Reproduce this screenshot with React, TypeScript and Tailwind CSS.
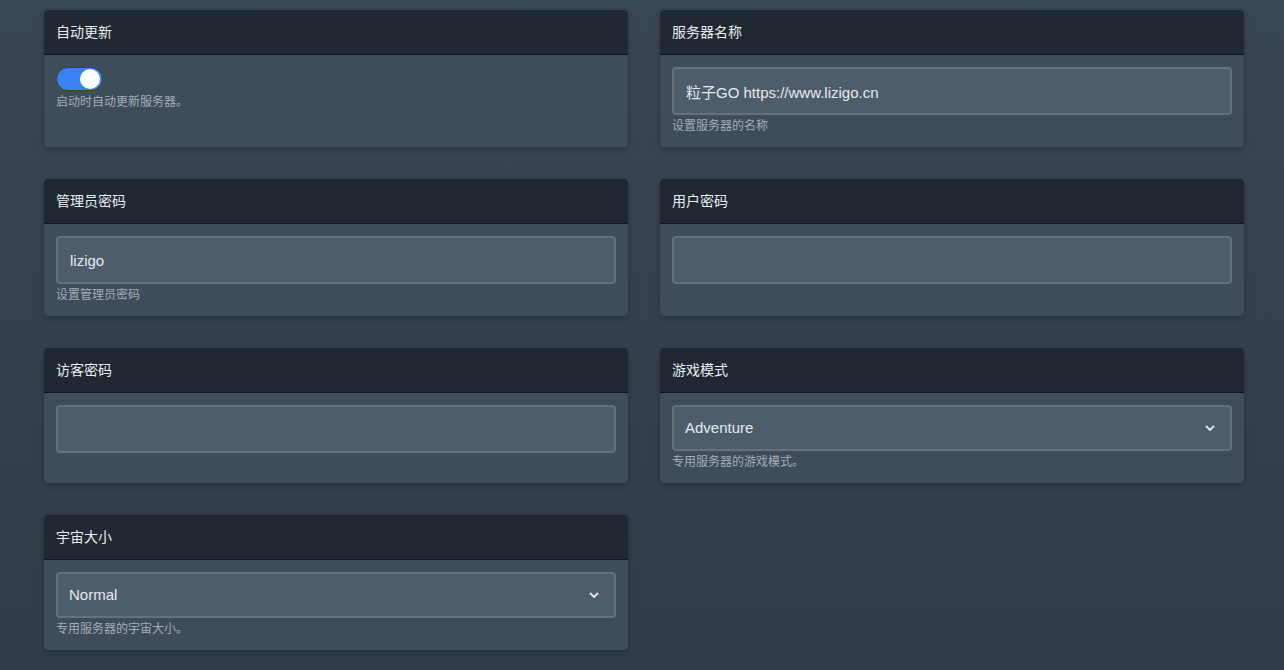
import { useState } from "react";

const font = { fontFamily: '"Liberation Sans", "Noto Sans CJK SC", sans-serif' };

function Card({ title, children }: { title: string; children: React.ReactNode }) {
  return (
    <section className="flex flex-col rounded-[4px] overflow-hidden bg-[#3f4c59] shadow-[0_2px_6px_rgba(0,0,0,0.25)]">
      <header className="h-[45px] flex items-center px-3 bg-[#1f2833] border-b border-[#12181f] text-[14px] text-[#e8edf2]">
        {title}
      </header>
      <div className="flex-1 px-3 pt-[12px] pb-[12px]">{children}</div>
    </section>
  );
}

function Help({ children }: { children: React.ReactNode }) {
  return <p className="mt-[3px] text-[12px] leading-[17px] text-[#a3adb8]">{children}</p>;
}

function TextField({ value }: { value: string }) {
  return (
    <input
      defaultValue={value}
      className="w-full h-[48px] px-[12px] rounded-[4px] bg-[#4f5c69] border-2 border-[#65717d] text-[15px] text-[#e3ebf2] outline-none"
      style={font}
    />
  );
}

function SelectField({ value }: { value: string }) {
  return (
    <div className="w-full h-[46px] px-[11px] rounded-[4px] bg-[#4f5c69] border-2 border-[#65717d] flex items-center justify-between text-[15px] text-[#e3ebf2]">
      <span>{value}</span>
      <svg width="12" height="8" viewBox="0 0 12 8" className="mr-[3px]">
        <polyline points="2,2 6,6 10,2" fill="none" stroke="#e3ebf2" strokeWidth="1.8" />
      </svg>
    </div>
  );
}

export default function App() {
  const [on, setOn] = useState(true);

  return (
    <main
      className="min-h-[670px] bg-gradient-to-b from-[#394653] to-[#313c48] pt-[10px] pl-[44px] pr-[40px] pb-5"
      style={font}
    >
      <div className="grid grid-cols-2 gap-x-8 gap-y-8">
        <Card title="自动更新">
          <button
            onClick={() => setOn(!on)}
            className={`w-[47px] h-[24px] rounded-full border border-[#3f4620] flex items-center px-[2px] ${
              on ? "bg-[#3b80f5] justify-end" : "bg-[#5b6773] justify-start"
            }`}
          >
            <span className="w-[20px] h-[20px] rounded-full bg-white" />
          </button>
          <Help>启动时自动更新服务器。</Help>
        </Card>

        <Card title="服务器名称">
          <TextField value="粒子GO https://www.lizigo.cn" />
          <Help>设置服务器的名称</Help>
        </Card>

        <Card title="管理员密码">
          <TextField value="lizigo" />
          <Help>设置管理员密码</Help>
        </Card>

        <Card title="用户密码">
          <TextField value="" />
        </Card>

        <Card title="访客密码">
          <TextField value="" />
        </Card>

        <Card title="游戏模式">
          <SelectField value="Adventure" />
          <Help>专用服务器的游戏模式。</Help>
        </Card>

        <Card title="宇宙大小">
          <SelectField value="Normal" />
          <Help>专用服务器的宇宙大小。</Help>
        </Card>
      </div>
    </main>
  );
}
